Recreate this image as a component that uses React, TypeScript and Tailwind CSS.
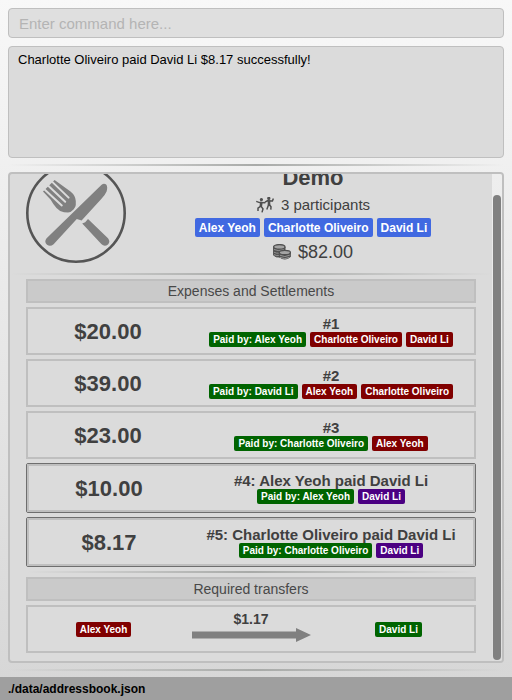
import React from "react";

type TagColor = "blue" | "green" | "red" | "purple";

const tagColors: Record<TagColor, string> = {
  blue: "bg-[#4169e1]",
  green: "bg-[#006400]",
  red: "bg-[#800000]",
  purple: "bg-[#4b0082]",
};

function Tag({ color, large, children }: { color: TagColor; large?: boolean; children: React.ReactNode }) {
  const size = large ? "pt-0.5 text-[12px] leading-[17px]" : "text-[10px] leading-[15px]";
  return (
    <span className={`rounded-[2px] px-1 font-bold whitespace-nowrap text-white ${size} ${tagColors[color]}`}>
      {children}
    </span>
  );
}

function Divider() {
  return <div role="separator" className="h-[2px] shrink-0 bg-linear-to-r from-transparent via-[#a8aaa8] to-transparent" />;
}

function SectionTitle({ children }: { children: React.ReactNode }) {
  return (
    <h2 className="border-2 border-[#bfbfbf] bg-[#cacaca] text-center text-[14px] leading-5 text-[#484848]">{children}</h2>
  );
}

interface Entry {
  amount: string;
  title: string;
  payer: string;
  payees: string[];
  settlement?: boolean;
}

const entries: Entry[] = [
  { amount: "$20.00", title: "#1", payer: "Alex Yeoh", payees: ["Charlotte Oliveiro", "David Li"] },
  { amount: "$39.00", title: "#2", payer: "David Li", payees: ["Alex Yeoh", "Charlotte Oliveiro"] },
  { amount: "$23.00", title: "#3", payer: "Charlotte Oliveiro", payees: ["Alex Yeoh"] },
  { amount: "$10.00", title: "#4: Alex Yeoh paid David Li", payer: "Alex Yeoh", payees: ["David Li"], settlement: true },
  {
    amount: "$8.17",
    title: "#5: Charlotte Oliveiro paid David Li",
    payer: "Charlotte Oliveiro",
    payees: ["David Li"],
    settlement: true,
  },
];

function EntryRow({ entry }: { entry: Entry }) {
  return (
    <li className={entry.settlement ? "rounded-[2px] border border-[#6e6e6e]" : ""}>
      <div className="flex h-12 items-center border-2 border-[#bfbfbf]">
        <div className="w-[160px] shrink-0 pt-0.5 text-center text-[22px] leading-6 font-bold">{entry.amount}</div>
        <div className="flex flex-1 flex-col items-center">
          <h3 className="text-[15px] leading-4 font-bold whitespace-nowrap">{entry.title}</h3>
          <div className="flex gap-1">
            <Tag color="green">Paid by: {entry.payer}</Tag>
            {entry.payees.map((name) => (
              <Tag key={name} color={entry.settlement ? "purple" : "red"}>
                {name}
              </Tag>
            ))}
          </div>
        </div>
      </div>
    </li>
  );
}

function CutleryIcon() {
  return (
    <svg viewBox="0 0 100 100" className="size-[100px] shrink-0" aria-hidden="true">
      <circle cx="50" cy="50" r="48.7" fill="none" stroke="#555" strokeWidth="2.6" />
      <path
        fill="#808080"
        d="M28.6 17 L44.5 28.4 Q49.6 32.5 49.8 38 V42 Q49.6 44.5 47.5 46.5 Q45 49.4 42 49.5 L38 49.3 Q33.5 48.5 30.5 45 Q27 41 24.5 36.5 L17 28.6 Z"
      />
      <g stroke="#dbdbdb" strokeWidth="2" strokeLinecap="round">
        <path d="M26 18.6 L42.6 34.6 M22 22.4 L39.2 38.7 M18.6 26.6 L35.8 42.4" />
      </g>
      <path
        fill="#808080"
        d="M75.6 21.7 Q78 20 80.2 21.6 Q82 24 80.6 28.4 Q79 32 75.5 35.8 L55.6 57.4 L50.8 56 L27.6 81.2 Q24.3 84.2 21 81.8 Q17.8 78.7 20.6 75.2 Z"
      />
      <path fill="#808080" d="M62 56 L59.2 59.2 L56.2 60.6 L75.3 81 Q78.5 84.4 82 81.5 Q84.7 78.5 82 75.2 Z" />
    </svg>
  );
}

function PeopleIcon() {
  return (
    <svg viewBox="0 0 18 16" className="h-4 w-[18px]" aria-hidden="true" fill="none" stroke="#505050" strokeWidth="1.5">
      <circle cx="5.4" cy="2.6" r="0.9" fill="#505050" />
      <circle cx="12.8" cy="1.4" r="0.9" fill="#505050" />
      <path d="M0.2 4.4 L3.6 5.6 L9.4 5.8 M4.8 9.2 L2 11.2 V14 M5 9.2 L7 11.8 L6 15.4" />
      <path d="M9 5.2 L11.4 3.8 L16.4 4 L17.4 1.4 M12.6 7.8 L10.8 12.6 M13.4 7.8 L15 9.8 L14.8 12.6" />
      <path strokeWidth="2.6" d="M5.4 4.8 L4.8 9.4 M13 3.4 V8.2" />
    </svg>
  );
}

function CoinsIcon() {
  return (
    <svg viewBox="0 0 18 16" className="h-4 w-[18px]" aria-hidden="true" stroke="#505050">
      <path fill="#505050" d="M0.6 3 V11.2 Q3 13.6 7 13 V7 L12 6 V3 Z" />
      <ellipse cx="6.3" cy="2.9" rx="5.7" ry="2.3" fill="#a4a4a4" strokeWidth="1.3" />
      <path fill="none" stroke="#b0b0b0" strokeWidth="0.7" d="M1 5.5 Q5 7.6 11 5.7 M1 8.2 Q3 9.4 6 9.2 M1 10.6 Q3 11.8 6 11.4" />
      <path fill="#505050" d="M6.3 8.5 V12.9 Q11.7 17.2 17.3 12.9 V8.5 Z" />
      <ellipse cx="11.8" cy="8.5" rx="5.6" ry="2.2" fill="#a4a4a4" strokeWidth="1.3" />
      <path fill="none" stroke="#b0b0b0" strokeWidth="0.7" d="M6.8 11.2 Q11.8 14 16.8 11.2 M7 13.3 Q11.8 16 16.6 13.3" />
    </svg>
  );
}

export default function App() {
  return (
    <div className="flex h-screen flex-col bg-linear-to-b from-[#f8f8f8] to-[#d6d6d6] font-['Liberation_Sans',Arial,sans-serif] text-[#404040]">
      <main className="flex min-h-0 flex-1 flex-col px-2 pt-2">
        <input
          type="text"
          aria-label="Command"
          placeholder="Enter command here..."
          className="h-[30px] w-full shrink-0 rounded-[4px] border border-[#bfbfbf] bg-[#dfdfdf] px-2.5 text-[15px] text-black outline-none placeholder:text-[#b4b4b4]"
        />
        <textarea
          readOnly
          aria-label="Result"
          defaultValue="Charlotte Oliveiro paid David Li $8.17 successfully!"
          className="mt-2 block h-28 w-full shrink-0 resize-none rounded-[4px] border border-[#bfbfbf] bg-[#dbdbdb] px-[9px] py-[5px] text-[13px] leading-4 text-black outline-none"
        />
        <div className="mt-1.5">
          <Divider />
        </div>
        <section
          aria-label="Activity"
          className="mt-1.5 flex min-h-0 flex-1 overflow-hidden rounded-[4px] border-2 border-[#bfbfbf] bg-[#dbdbdb]"
        >
          <div className="flex min-w-0 flex-1 flex-col justify-end gap-1 pb-2">
            <header className="flex gap-6 px-4 pb-0.5">
              <CutleryIcon />
              <div className="flex flex-1 flex-col items-center">
                <h1 className="pt-0.5 text-[22px] leading-[26px] font-bold">Demo</h1>
                <p className="flex items-center gap-[7px] text-[15px] leading-[27px]">
                  <PeopleIcon />3 participants
                </p>
                <div className="flex gap-1">
                  <Tag color="blue" large>Alex Yeoh</Tag>
                  <Tag color="blue" large>Charlotte Oliveiro</Tag>
                  <Tag color="blue" large>David Li</Tag>
                </div>
                <p className="flex items-center gap-[7px] text-[18px] leading-[30px]">
                  <CoinsIcon />
                  $82.00
                </p>
              </div>
            </header>
            <Divider />
            <div className="flex flex-col gap-1 px-4">
              <SectionTitle>Expenses and Settlements</SectionTitle>
              <ul className="flex flex-col gap-1">
                {entries.map((entry) => (
                  <EntryRow key={entry.title} entry={entry} />
                ))}
              </ul>
              <Divider />
              <SectionTitle>Required transfers</SectionTitle>
              <div className="grid h-12 grid-cols-[1fr_144px_1fr] items-center border-2 border-[#bfbfbf]">
                <div className="flex justify-center">
                  <Tag color="red">Alex Yeoh</Tag>
                </div>
                <div className="flex flex-col items-center gap-px pb-[5px]">
                  <span className="text-[14px] leading-4 font-bold">$1.17</span>
                  <svg viewBox="0 0 119 14" className="h-3.5 w-[119px]" aria-hidden="true">
                    <path fill="#808080" d="M0 3.5 H104 V0 L119 7 L104 14 V10.5 H0 Z" />
                  </svg>
                </div>
                <div className="flex justify-center">
                  <Tag color="green">David Li</Tag>
                </div>
              </div>
            </div>
          </div>
          <div aria-hidden="true" className="flex w-2.5 shrink-0 flex-col bg-linear-to-b from-[#eeeeee] to-[#dddddd] px-px pt-[21px] pb-px">
            <div className="flex-1 rounded-full bg-[#808080]" />
          </div>
        </section>
        <div className="py-1.5">
          <Divider />
        </div>
      </main>
      <footer className="bg-[#9f9f9f] px-2 pt-0.5 text-[12px] leading-[21px] font-bold text-black">./data/addressbook.json</footer>
    </div>
  );
}
